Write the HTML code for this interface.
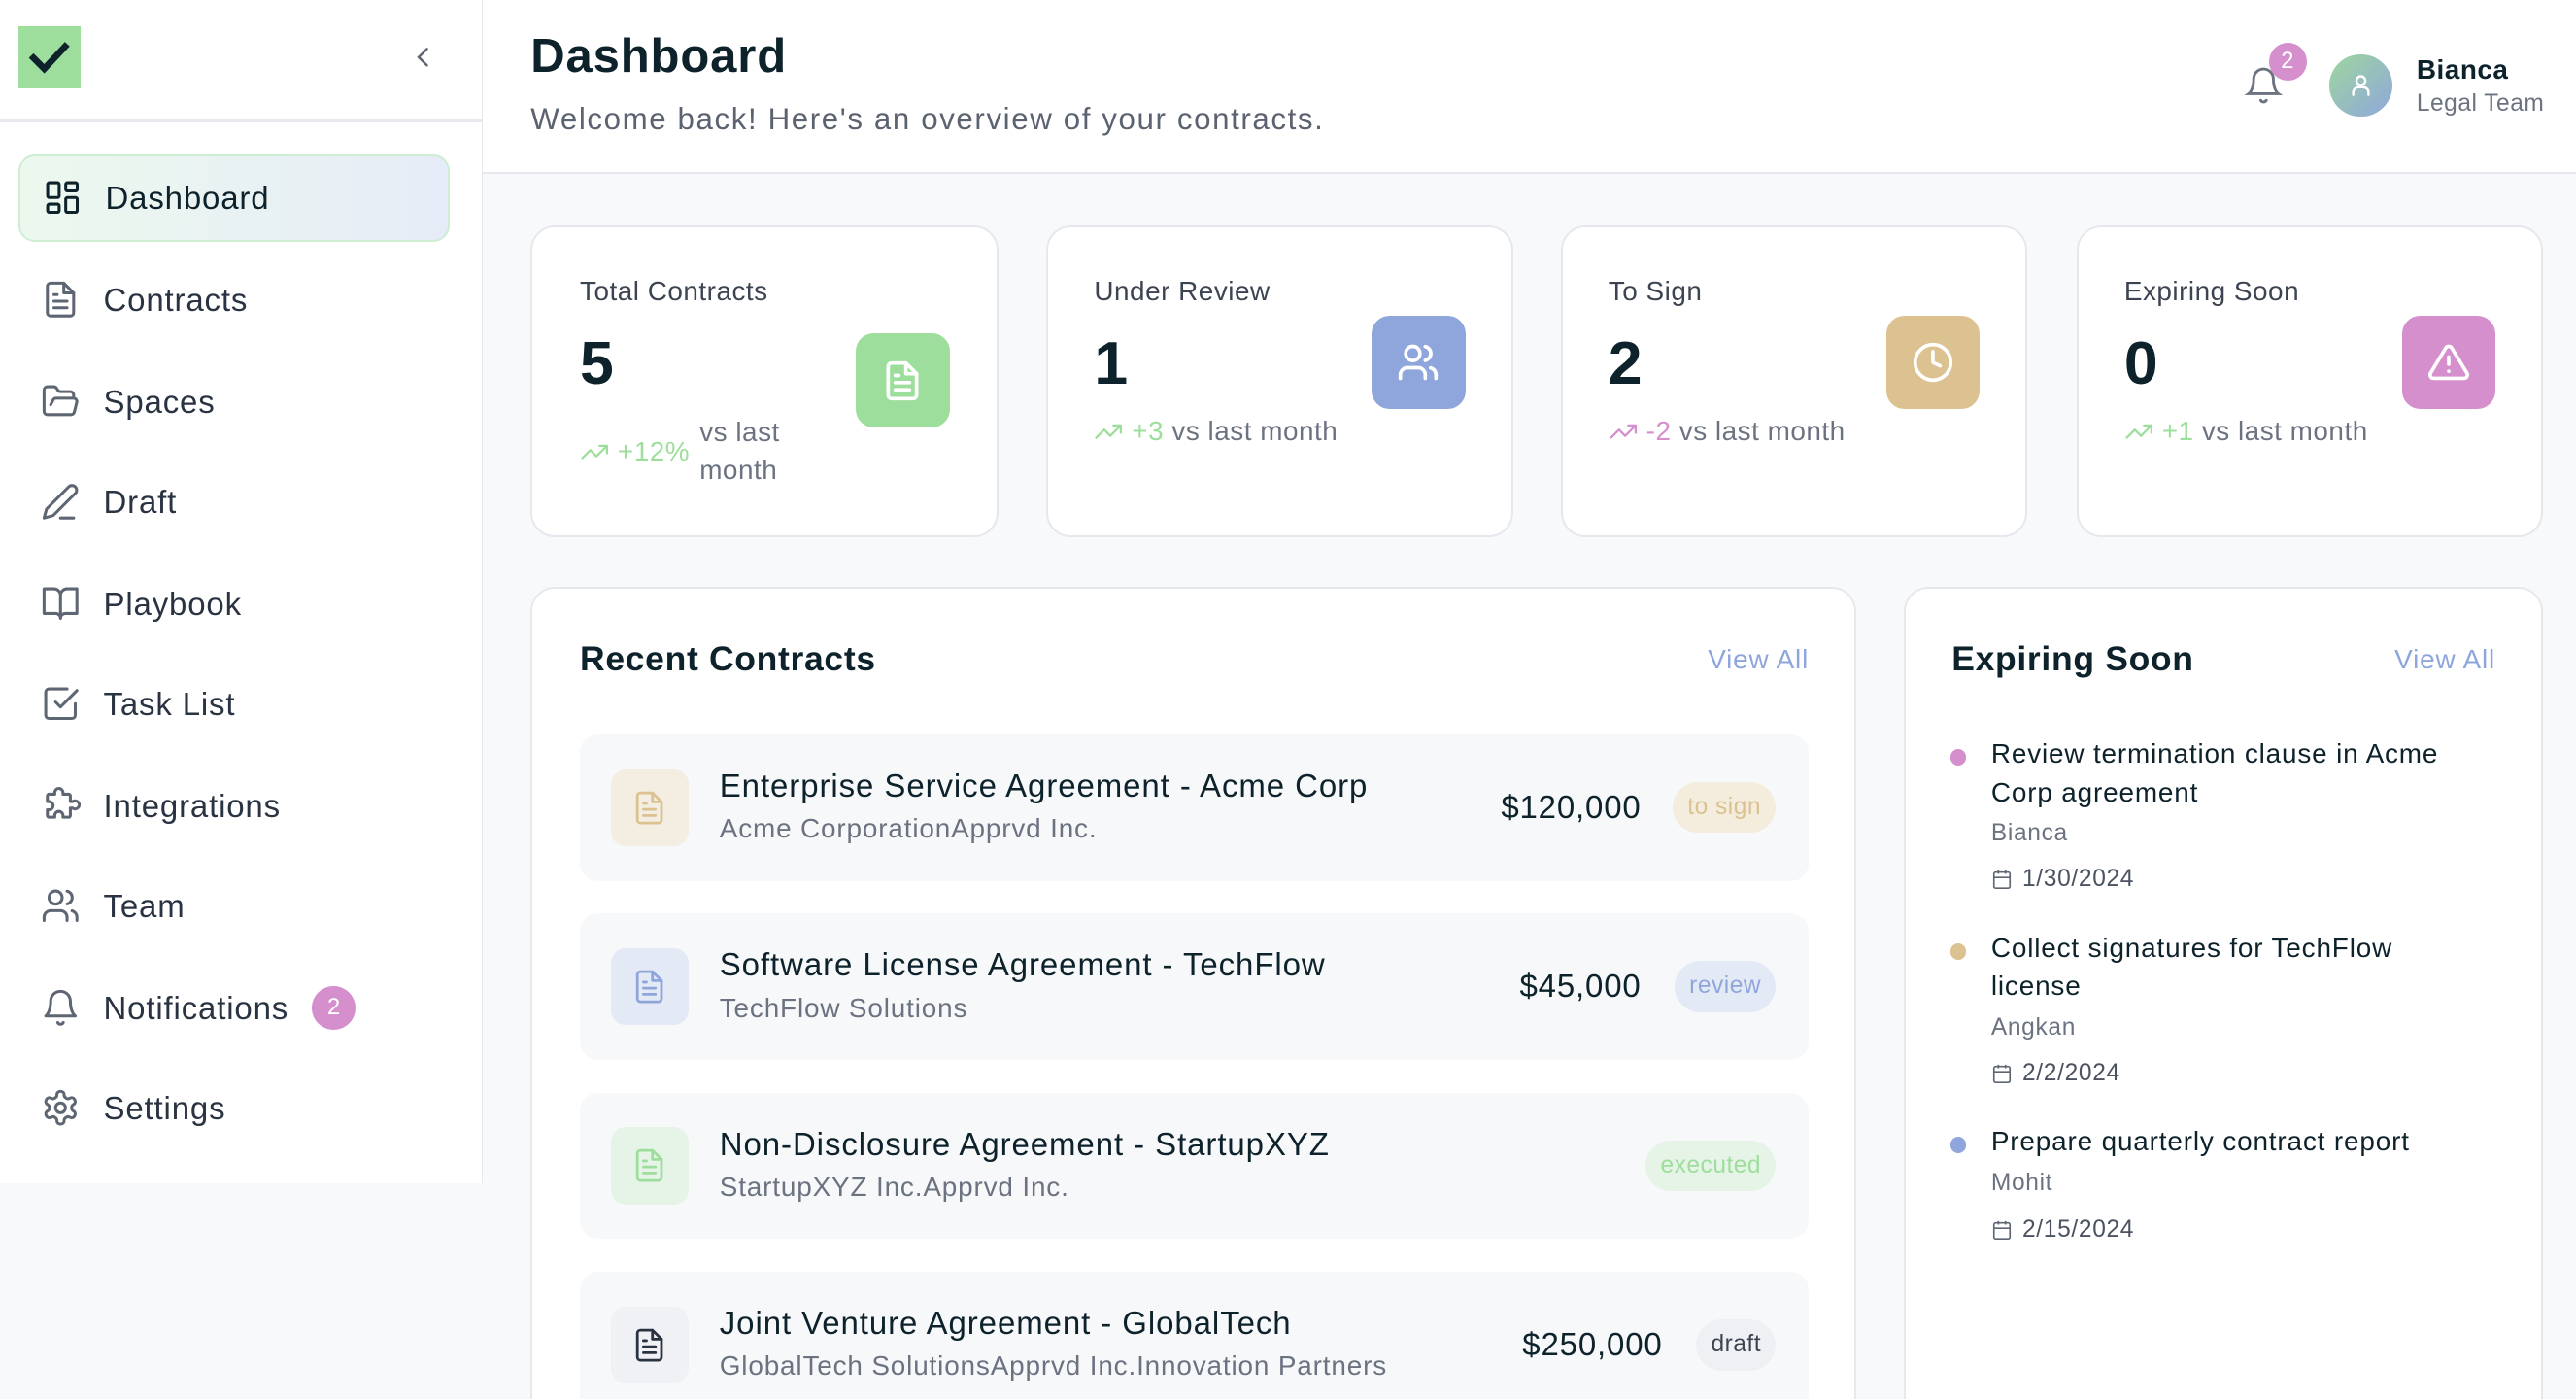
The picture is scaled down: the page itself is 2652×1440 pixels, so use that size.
<!DOCTYPE html>
<html><head><meta charset="utf-8"><style>
*{box-sizing:border-box;margin:0;padding:0}
html,body{width:2652px;height:1440px;overflow:hidden;background:#f8f9fb}
#r{zoom:1.6913;width:1568px;height:852px;position:relative;font-family:"Liberation Sans",sans-serif;color:#0d222b;letter-spacing:0.3px}
.a{position:absolute}
.side{left:0;top:0;width:294px;height:720px;background:#fff;border-right:1px solid #e8e9ee}
.nav{left:11px;width:263px;height:53px;display:flex;align-items:center;padding-left:14px;font-size:19.5px;color:#2a3342;font-weight:500;letter-spacing:0.5px}
.nav svg{width:24px;height:24px;margin-right:14px;fill:none;stroke:#5e6673;stroke-width:1.8;stroke-linecap:round;stroke-linejoin:round}
.card{background:#fff;border:1.5px solid #e6e8ed;border-radius:15px}
.lbl{font-size:16.5px;color:#3c4452}
.num{font-size:37px;font-weight:700;color:#0d222b}
.tr{font-size:16.5px;color:#6b7280;display:flex;align-items:center;white-space:nowrap}
.tr svg{width:18px;height:18px;margin-right:5px;fill:none;stroke-width:1.8;stroke-linecap:round;stroke-linejoin:round}
.ib{width:57px;height:57px;border-radius:11px;display:flex;align-items:center;justify-content:center}
.ib svg{width:26px;height:26px;fill:none;stroke:#fff;stroke-width:2;stroke-linecap:round;stroke-linejoin:round}
.row{left:353px;width:748px;height:89px;background:#f7f8fa;border-radius:11px}
.ric{position:absolute;left:19px;top:21px;width:47px;height:47px;border-radius:9px;display:flex;align-items:center;justify-content:center}
.ric svg{width:22px;height:22px;fill:none;stroke-width:1.8;stroke-linecap:round;stroke-linejoin:round}
.rt{position:absolute;left:85px;top:20px;font-size:19.5px;font-weight:500;color:#0d222b;white-space:nowrap;letter-spacing:0.55px}
.rs{position:absolute;left:85px;top:48px;font-size:16.5px;color:#6b7280;white-space:nowrap;letter-spacing:0.5px}
.amt{position:absolute;top:33px;font-size:19.5px;font-weight:500;right:102px;letter-spacing:0.5px}
.pill{position:absolute;right:20px;top:29px;height:31px;border-radius:16px;font-size:14.5px;padding:0 9px;line-height:31px}
.ex{left:1212px;font-size:16.5px;font-weight:500;line-height:23.5px;width:295px;letter-spacing:0.5px}
.dot{width:10px;height:10px;border-radius:50%;left:1187px}
.who{left:1212px;font-size:14.5px;color:#6b7280;letter-spacing:0.4px}
.dt{left:1212px;font-size:14.5px;color:#4b5260;display:flex;align-items:center;letter-spacing:0.4px}
.dt svg{width:13px;height:13px;margin-right:6px;fill:none;stroke:#5e6673;stroke-width:1.8}
.va{font-size:16.5px;color:#8fa6dc;font-weight:500;letter-spacing:0.5px;text-align:right;width:100px}
</style></head><body><div id="r">
<div class="a side"></div>
<div class="a" style="left:11px;top:16px;width:38px;height:38px;background:#9ede9c"></div>
<svg class="a" style="left:16px;top:22px" width="28" height="26" viewBox="0 0 28 26"><path d="M3 12l8 8L25 5" fill="none" stroke="#0d222b" stroke-width="4"/></svg>
<svg class="a" style="left:252px;top:28px" width="12" height="14" viewBox="0 0 12 14"><path d="M8 2L3 7l5 5" fill="none" stroke="#5e6673" stroke-width="1.5" stroke-linecap="round"/></svg>
<div class="a" style="left:0;top:73px;width:294px;height:1.5px;background:#e8e9ee"></div>
<div class="a nav" style="top:94px;background:linear-gradient(90deg,#ecf8ee,#e6ecf7);border:1.5px solid #cdeed3;border-radius:10px;color:#0d222b"><svg viewBox="0 0 24 24" style="stroke:#0d222b"><rect x="3" y="3" width="7" height="9" rx="1"/><rect x="14" y="3" width="7" height="5" rx="1"/><rect x="14" y="12" width="7" height="9" rx="1"/><rect x="3" y="16" width="7" height="5" rx="1"/></svg>Dashboard</div>
<div class="a nav" style="top:156px"><svg viewBox="0 0 24 24"><path d="M14 2H6a2 2 0 0 0-2 2v16a2 2 0 0 0 2 2h12a2 2 0 0 0 2-2V8z"/><path d="M14 2v6h6M16 13H8M16 17H8M10 9H8"/></svg>Contracts</div>
<div class="a nav" style="top:218px"><svg viewBox="0 0 24 24"><path d="M6 14l1.5-2.9A2 2 0 0 1 9.2 10H20a2 2 0 0 1 1.9 2.5l-1.5 6A2 2 0 0 1 18.5 20H4a2 2 0 0 1-2-2V5a2 2 0 0 1 2-2h3.9a2 2 0 0 1 1.7.9l.8 1.2a2 2 0 0 0 1.7.9H18a2 2 0 0 1 2 2v2"/></svg>Spaces</div>
<div class="a nav" style="top:279px"><svg viewBox="0 0 24 24"><path d="M17 3a2.8 2.8 0 1 1 4 4L7.5 20.5 2 22l1.5-5.5z"/><path d="M12 22h8"/></svg>Draft</div>
<div class="a nav" style="top:341px"><svg viewBox="0 0 24 24"><path d="M2 3h6a4 4 0 0 1 4 4v14a3 3 0 0 0-3-3H2zM22 3h-6a4 4 0 0 0-4 4v14a3 3 0 0 1 3-3h7z"/></svg>Playbook</div>
<div class="a nav" style="top:402px"><svg viewBox="0 0 24 24"><path d="M9 11l3 3L22 4"/><path d="M21 12v7a2 2 0 0 1-2 2H5a2 2 0 0 1-2-2V5a2 2 0 0 1 2-2h11"/></svg>Task List</div>
<div class="a nav" style="top:464px"><svg viewBox="0 0 24 24"><path d="M19.4 13.5a2.5 2.5 0 1 0 0-4H18V6a1 1 0 0 0-1-1h-3.5v-1a2.5 2.5 0 1 0-5 0v1H5a1 1 0 0 0-1 1v3.5h1a2.5 2.5 0 1 1 0 5H4V18a1 1 0 0 0 1 1h3.5v-1a2.5 2.5 0 1 1 5 0v1H17a1 1 0 0 0 1-1v-4.5z"/></svg>Integrations</div>
<div class="a nav" style="top:525px"><svg viewBox="0 0 24 24"><path d="M16 21v-2a4 4 0 0 0-4-4H6a4 4 0 0 0-4 4v2"/><circle cx="9" cy="7" r="4"/><path d="M22 21v-2a4 4 0 0 0-3-3.9M16 3.1a4 4 0 0 1 0 7.8"/></svg>Team</div>
<div class="a nav" style="top:587px"><svg viewBox="0 0 24 24"><path d="M6 8a6 6 0 0 1 12 0c0 7 3 9 3 9H3s3-2 3-9M10.3 21a1.9 1.9 0 0 0 3.4 0"/></svg>Notifications<span style="margin-left:14px;width:27px;height:27px;border-radius:50%;background:#d48fcc;color:#fff;font-size:14px;display:flex;align-items:center;justify-content:center;letter-spacing:0">2</span></div>
<div class="a nav" style="top:648px"><svg viewBox="0 0 24 24"><path d="M12.2 2h-.4a2 2 0 0 0-2 2v.2a2 2 0 0 1-1 1.7l-.4.3a2 2 0 0 1-2 0l-.2-.1a2 2 0 0 0-2.7.7l-.2.4a2 2 0 0 0 .7 2.7l.2.1a2 2 0 0 1 1 1.7v.5a2 2 0 0 1-1 1.7l-.2.1a2 2 0 0 0-.7 2.7l.2.4a2 2 0 0 0 2.7.7l.2-.1a2 2 0 0 1 2 0l.4.3a2 2 0 0 1 1 1.7v.2a2 2 0 0 0 2 2h.4a2 2 0 0 0 2-2v-.2a2 2 0 0 1 1-1.7l.4-.3a2 2 0 0 1 2 0l.2.1a2 2 0 0 0 2.7-.7l.2-.4a2 2 0 0 0-.7-2.7l-.2-.1a2 2 0 0 1-1-1.7v-.5a2 2 0 0 1 1-1.7l.2-.1a2 2 0 0 0 .7-2.7l-.2-.4a2 2 0 0 0-2.7-.7l-.2.1a2 2 0 0 1-2 0l-.4-.3a2 2 0 0 1-1-1.7V4a2 2 0 0 0-2-2z"/><circle cx="12" cy="12" r="3"/></svg>Settings</div>

<div class="a" style="left:294px;top:0;width:1274px;height:106px;background:#fff;border-bottom:1.5px solid #e6e8ed"></div>
<div class="a" style="left:323px;top:18px;font-size:29px;font-weight:700;letter-spacing:0.5px">Dashboard</div>
<div class="a" style="left:323px;top:62px;font-size:18.5px;color:#5b6270;letter-spacing:0.95px">Welcome back! Here's an overview of your contracts.</div>
<svg class="a" style="left:1366px;top:39px" width="24" height="26" viewBox="0 0 24 24"><path d="M6 8a6 6 0 0 1 12 0c0 7 3 9 3 9H3s3-2 3-9M10.3 21a1.9 1.9 0 0 0 3.4 0" fill="none" stroke="#6b7280" stroke-width="1.7" stroke-linecap="round"/></svg>
<div class="a" style="left:1381px;top:26px;width:23px;height:23px;border-radius:50%;background:#d48fcc;color:#fff;font-size:14px;display:flex;align-items:center;justify-content:center">2</div>
<div class="a" style="left:1418px;top:33px;width:38px;height:38px;border-radius:50%;background:linear-gradient(135deg,#9ed79e,#8fa6dc);display:flex;align-items:center;justify-content:center"><svg width="16" height="16" viewBox="0 0 24 24" fill="none" stroke="#fff" stroke-width="2.2" stroke-linecap="round"><circle cx="12" cy="8" r="4"/><path d="M5 21v-2a5 5 0 0 1 5-5h4a5 5 0 0 1 5 5v2"/></svg></div>
<div class="a" style="left:1471px;top:33px;font-size:16.5px;font-weight:600">Bianca</div>
<div class="a" style="left:1471px;top:55px;font-size:14.5px;color:#6b7280">Legal Team</div>

<!-- stat cards -->
<div class="a card" style="left:323px;top:137px;width:285px;height:190px"></div>
<div class="a lbl" style="left:353px;top:168px">Total Contracts</div>
<div class="a num" style="left:353px;top:200px">5</div>
<div class="a tr" style="left:353px;top:252px"><svg viewBox="0 0 24 24" style="stroke:#9ede9c"><path d="M22 7l-8.5 8.5-5-5L2 17M16 7h6v6"/></svg><span style="color:#9ede9c">+12%</span><span style="margin-left:6px;line-height:23px;display:inline-block;width:60px;white-space:normal">vs last month</span></div>
<div class="a ib" style="left:521px;top:203px;background:#9ede9c"><svg viewBox="0 0 24 24"><path d="M14 2H6a2 2 0 0 0-2 2v16a2 2 0 0 0 2 2h12a2 2 0 0 0 2-2V8z"/><path d="M14 2v6h6M16 13H8M16 17H8M10 9H8"/></svg></div>

<div class="a card" style="left:637px;top:137px;width:284px;height:190px"></div>
<div class="a lbl" style="left:666px;top:168px">Under Review</div>
<div class="a num" style="left:666px;top:200px">1</div>
<div class="a tr" style="left:666px;top:253px"><svg viewBox="0 0 24 24" style="stroke:#9ede9c"><path d="M22 7l-8.5 8.5-5-5L2 17M16 7h6v6"/></svg><span style="color:#9ede9c">+3</span>&nbsp;vs last month</div>
<div class="a ib" style="left:835px;top:192px;background:#8fa6dc"><svg viewBox="0 0 24 24"><path d="M16 21v-2a4 4 0 0 0-4-4H6a4 4 0 0 0-4 4v2"/><circle cx="9" cy="7" r="4"/><path d="M22 21v-2a4 4 0 0 0-3-3.9M16 3.1a4 4 0 0 1 0 7.8"/></svg></div>

<div class="a card" style="left:950px;top:137px;width:284px;height:190px"></div>
<div class="a lbl" style="left:979px;top:168px">To Sign</div>
<div class="a num" style="left:979px;top:200px">2</div>
<div class="a tr" style="left:979px;top:253px"><svg viewBox="0 0 24 24" style="stroke:#d48fcc"><path d="M22 7l-8.5 8.5-5-5L2 17M16 7h6v6"/></svg><span style="color:#d48fcc">-2</span>&nbsp;vs last month</div>
<div class="a ib" style="left:1148px;top:192px;background:#dbc290"><svg viewBox="0 0 24 24"><circle cx="12" cy="12" r="10"/><path d="M12 6v6l4 2"/></svg></div>

<div class="a card" style="left:1264px;top:137px;width:284px;height:190px"></div>
<div class="a lbl" style="left:1293px;top:168px">Expiring Soon</div>
<div class="a num" style="left:1293px;top:200px">0</div>
<div class="a tr" style="left:1293px;top:253px"><svg viewBox="0 0 24 24" style="stroke:#9ede9c"><path d="M22 7l-8.5 8.5-5-5L2 17M16 7h6v6"/></svg><span style="color:#9ede9c">+1</span>&nbsp;vs last month</div>
<div class="a ib" style="left:1462px;top:192px;background:#d48fcc"><svg viewBox="0 0 24 24"><path d="M10.3 3.9L1.8 18a2 2 0 0 0 1.7 3h17a2 2 0 0 0 1.7-3L13.7 3.9a2 2 0 0 0-3.4 0zM12 9v4M12 17h.01"/></svg></div>

<!-- recent contracts -->
<div class="a card" style="left:323px;top:357px;width:807px;height:520px"></div>
<div class="a" style="left:353px;top:389px;font-size:21px;font-weight:600;letter-spacing:0.4px">Recent Contracts</div>
<div class="a va" style="left:1001px;top:392px">View All</div>

<div class="a row" style="top:447px"><div class="ric" style="background:#f3ede2"><svg viewBox="0 0 24 24" style="stroke:#dbc290"><path d="M14 2H6a2 2 0 0 0-2 2v16a2 2 0 0 0 2 2h12a2 2 0 0 0 2-2V8z"/><path d="M14 2v6h6M16 13H8M16 17H8M10 9H8"/></svg></div><div class="rt">Enterprise Service Agreement - Acme Corp</div><div class="rs">Acme CorporationApprvd Inc.</div><div class="amt">$120,000</div><div class="pill" style="background:#f4ecdc;color:#dbc290">to sign</div></div>
<div class="a row" style="top:556px"><div class="ric" style="background:#e4e9f6"><svg viewBox="0 0 24 24" style="stroke:#8fa6dc"><path d="M14 2H6a2 2 0 0 0-2 2v16a2 2 0 0 0 2 2h12a2 2 0 0 0 2-2V8z"/><path d="M14 2v6h6M16 13H8M16 17H8M10 9H8"/></svg></div><div class="rt">Software License Agreement - TechFlow</div><div class="rs">TechFlow Solutions</div><div class="amt">$45,000</div><div class="pill" style="background:#e4e9f6;color:#8fa6dc">review</div></div>
<div class="a row" style="top:665px"><div class="ric" style="background:#e5f4e7"><svg viewBox="0 0 24 24" style="stroke:#9ede9c"><path d="M14 2H6a2 2 0 0 0-2 2v16a2 2 0 0 0 2 2h12a2 2 0 0 0 2-2V8z"/><path d="M14 2v6h6M16 13H8M16 17H8M10 9H8"/></svg></div><div class="rt">Non-Disclosure Agreement - StartupXYZ</div><div class="rs">StartupXYZ Inc.Apprvd Inc.</div><div class="pill" style="background:#e5f4e7;color:#9ede9c">executed</div></div>
<div class="a row" style="top:774px"><div class="ric" style="background:#f0f1f4"><svg viewBox="0 0 24 24" style="stroke:#2a3342"><path d="M14 2H6a2 2 0 0 0-2 2v16a2 2 0 0 0 2 2h12a2 2 0 0 0 2-2V8z"/><path d="M14 2v6h6M16 13H8M16 17H8M10 9H8"/></svg></div><div class="rt">Joint Venture Agreement - GlobalTech</div><div class="rs">GlobalTech SolutionsApprvd Inc.Innovation Partners</div><div class="amt" style="right:89px">$250,000</div><div class="pill" style="background:#eff0f3;color:#3c4452">draft</div></div>

<!-- expiring -->
<div class="a card" style="left:1159px;top:357px;width:389px;height:520px"></div>
<div class="a" style="left:1188px;top:389px;font-size:21px;font-weight:600;letter-spacing:0.4px">Expiring Soon</div>
<div class="a va" style="left:1419px;top:392px">View All</div>
<div class="a dot" style="top:456px;background:#d48fcc"></div>
<div class="a ex" style="top:447px">Review termination clause in Acme Corp agreement</div>
<div class="a who" style="top:499px">Bianca</div>
<div class="a dt" style="top:527px"><svg viewBox="0 0 24 24"><rect x="3" y="4" width="18" height="18" rx="2"/><path d="M16 2v4M8 2v4M3 10h18"/></svg>1/30/2024</div>
<div class="a dot" style="top:574px;background:#dbc290"></div>
<div class="a ex" style="top:565px">Collect signatures for TechFlow license</div>
<div class="a who" style="top:617px">Angkan</div>
<div class="a dt" style="top:645px"><svg viewBox="0 0 24 24"><rect x="3" y="4" width="18" height="18" rx="2"/><path d="M16 2v4M8 2v4M3 10h18"/></svg>2/2/2024</div>
<div class="a dot" style="top:692px;background:#8fa6dc"></div>
<div class="a ex" style="top:683px;width:300px">Prepare quarterly contract report</div>
<div class="a who" style="top:712px">Mohit</div>
<div class="a dt" style="top:740px"><svg viewBox="0 0 24 24"><rect x="3" y="4" width="18" height="18" rx="2"/><path d="M16 2v4M8 2v4M3 10h18"/></svg>2/15/2024</div>
</div></body></html>
